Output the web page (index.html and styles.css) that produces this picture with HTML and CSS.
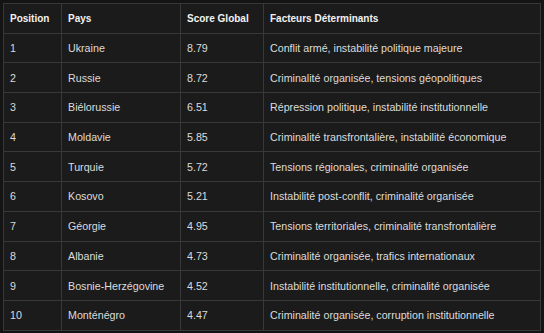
FILE: index.html
```html
<!DOCTYPE html>
<html lang="fr">
<head>
<meta charset="utf-8">
<link rel="stylesheet" href="styles.css">
</head>
<body>
<table class="rank">
  <colgroup>
    <col class="c1"><col class="c2"><col class="c3"><col class="c4">
  </colgroup>
  <thead>
    <tr><th>Position</th><th>Pays</th><th>Score Global</th><th>Facteurs Déterminants</th></tr>
  </thead>
  <tbody>
    <tr><td>1</td><td>Ukraine</td><td>8.79</td><td>Conflit armé, instabilité politique majeure</td></tr>
    <tr><td>2</td><td>Russie</td><td>8.72</td><td>Criminalité organisée, tensions géopolitiques</td></tr>
    <tr><td>3</td><td>Biélorussie</td><td>6.51</td><td>Répression politique, instabilité institutionnelle</td></tr>
    <tr><td>4</td><td>Moldavie</td><td>5.85</td><td>Criminalité transfrontalière, instabilité économique</td></tr>
    <tr><td>5</td><td>Turquie</td><td>5.72</td><td>Tensions régionales, criminalité organisée</td></tr>
    <tr><td>6</td><td>Kosovo</td><td>5.21</td><td>Instabilité post-conflit, criminalité organisée</td></tr>
    <tr><td>7</td><td>Géorgie</td><td>4.95</td><td>Tensions territoriales, criminalité transfrontalière</td></tr>
    <tr><td>8</td><td>Albanie</td><td>4.73</td><td>Criminalité organisée, trafics internationaux</td></tr>
    <tr><td>9</td><td>Bosnie-Herzégovine</td><td>4.52</td><td>Instabilité institutionnelle, criminalité organisée</td></tr>
    <tr><td>10</td><td>Monténégro</td><td>4.47</td><td>Criminalité organisée, corruption institutionnelle</td></tr>
  </tbody>
</table>
</body>
</html>
```
FILE: styles.css
```css
html, body {
  margin: 0;
  background: #141414;
}
body {
  padding: 3px 4px 0 3px;
  font-family: "Liberation Sans", Arial, sans-serif;
  font-size: 10.7px;
  color: #dcdcdc;
}
.rank {
  border-collapse: collapse;
  width: 537px;
  table-layout: fixed;
  background: #1b1b1b;
  border: 1px solid #383838;
}
.c1 { width: 58px; }
.c2 { width: 119px; }
.c3 { width: 83px; }
.c4 { width: 277px; }
.rank th, .rank td {
  border: 1px solid #383838;
  padding: 0 6px;
  height: 28.7px;
  text-align: left;
  vertical-align: middle;
  white-space: nowrap;
}
.rank th {
  font-weight: bold;
  color: #f2f2f2;
  font-size: 10px;
}
```
